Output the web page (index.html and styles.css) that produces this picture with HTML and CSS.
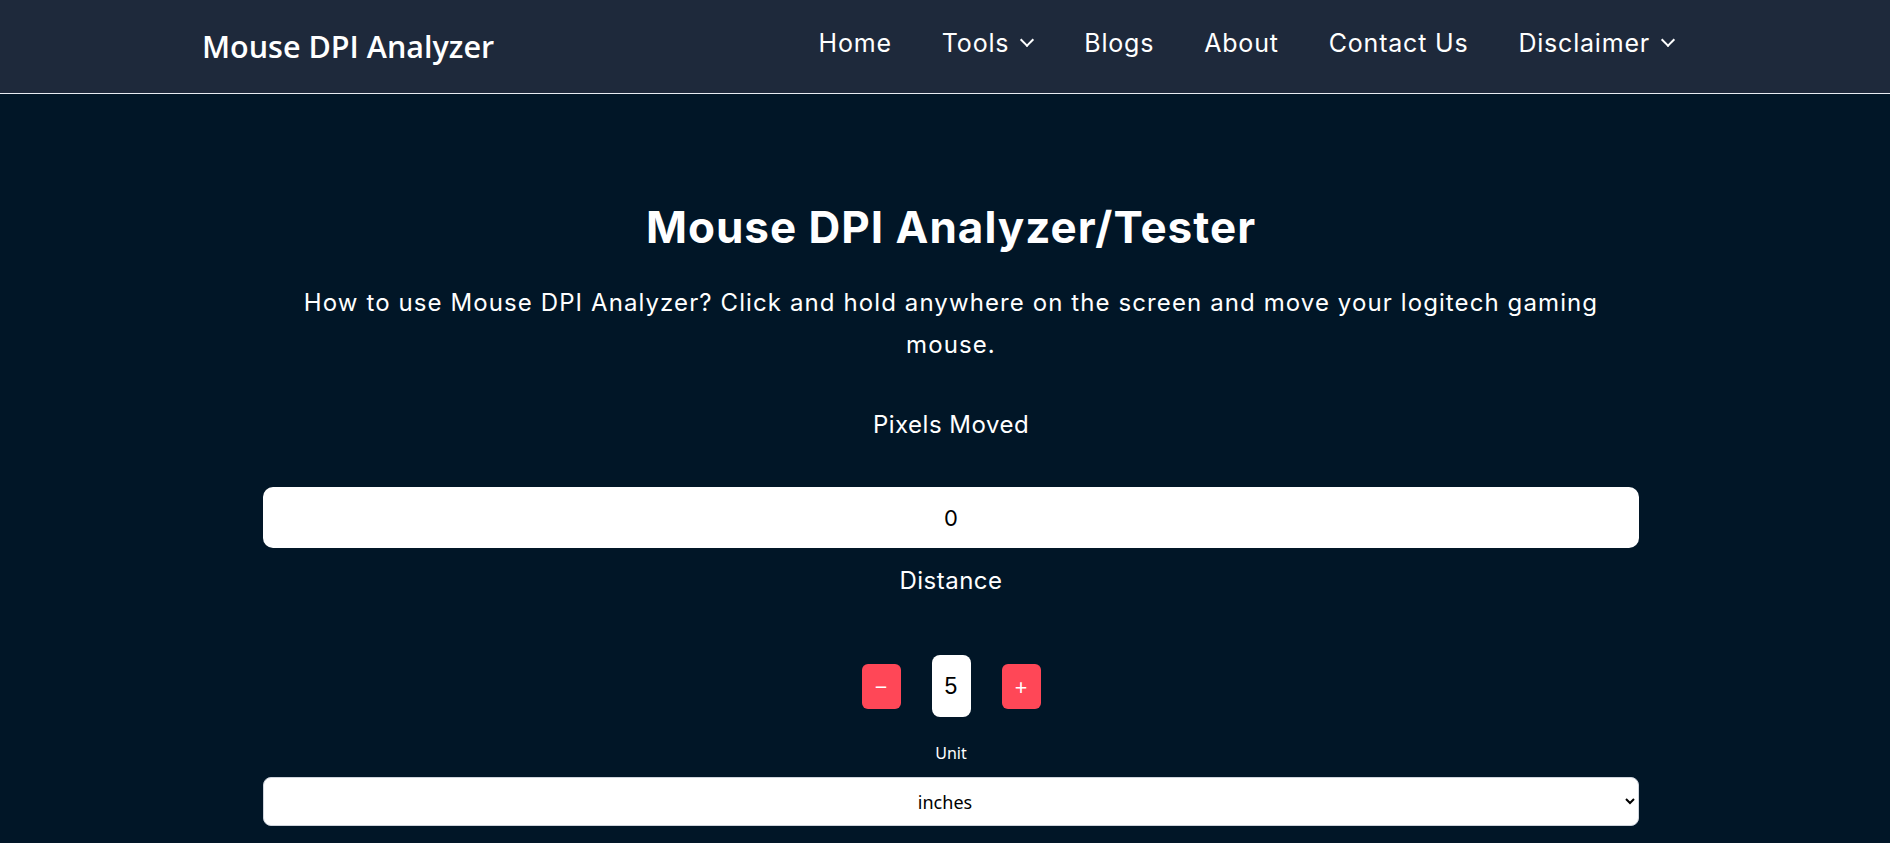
FILE: index.html
```html
<!DOCTYPE html>
<html lang="en">
<head>
    <meta charset="UTF-8">
    <meta name="viewport" content="width=device-width, initial-scale=1.0">
    <title>Mouse DPI Analyzer</title>
    <link rel="stylesheet" href="styles.css">
</head>
<body>
    <header class="topbar">
        <a class="logo" href="#">Mouse DPI Analyzer</a>
        <ul class="menu">
            <li><a href="#">Home</a></li>
            <li><a href="#">Tools</a><span class="caret"></span></li>
            <li><a href="#">Blogs</a></li>
            <li><a href="#">About</a></li>
            <li><a href="#">Contact Us</a></li>
            <li><a href="#">Disclaimer</a><span class="caret"></span></li>
        </ul>
    </header>
    <main class="tester">
        <h1>Mouse DPI Analyzer/Tester</h1>
        <p class="intro">How to use Mouse DPI Analyzer? Click and hold anywhere on the screen and move your logitech gaming mouse.</p>
        <h3 class="label">Pixels Moved</h3>
        <input class="field" id="pixels" type="text" value="0" readonly>
        <h3 class="label distance">Distance</h3>
        <div class="stepper">
            <button class="step" id="minus">&minus;</button>
            <input class="count" id="dist" type="text" value="5">
            <button class="step" id="plus">+</button>
        </div>
        <label class="unit" for="unit">Unit</label>
        <select class="units" id="unit">
            <option>inches</option>
            <option>cm</option>
        </select>
    </main>
    <script>
        var dist = document.getElementById('dist')
        document.getElementById('minus').onclick = function(){
            if(+dist.value > 1) dist.value = +dist.value - 1
        }
        document.getElementById('plus').onclick = function(){
            dist.value = +dist.value + 1
        }
    </script>
</body>
</html>
```

FILE: styles.css
```css
body{
    margin: 0;
    padding: 0;
    background: #011627;
    color: #fff;
    font-family: "Inter", "Noto Sans", sans-serif;
}
a{
    color: inherit;
    text-decoration: none;
}
.topbar{
    height: 93px;
    border-bottom: 1px solid #e8ecf2;
    background: #1e293b;
    display: flex;
    align-items: center;
    justify-content: space-between;
    padding: 0 215px 0 202px;
}
.logo{
    font-family: "Open Sans", sans-serif;
    font-weight: 600;
    font-size: 30.5px;
    margin-top: -2px;
}
.menu{
    list-style: none;
    margin: 0;
    padding: 0;
    display: flex;
    gap: 50px;
    font-size: 25px;
    letter-spacing: 0.8px;
    margin-top: -8px;
}
.menu li{
    display: flex;
    align-items: center;
}
.caret{
    width: 8px;
    height: 8px;
    border-right: 2px solid #fff;
    border-bottom: 2px solid #fff;
    transform: rotate(45deg);
    margin: -6px 2px 0 13px;
}
.tester{
    width: 1376px;
    margin: 0 auto;
    padding: 107px 0 0 12px;
    display: flex;
    flex-direction: column;
    align-items: center;
    text-align: center;
}
.tester h1{
    margin: 0;
    font-size: 44px;
    line-height: 52px;
    font-weight: 700;
    letter-spacing: 1px;
}
.intro{
    margin: 29px 0 0;
    max-width: 1330px;
    font-size: 24px;
    line-height: 42px;
    letter-spacing: 1.1px;
}
.label{
    margin: 41px 0 0;
    font-size: 24px;
    line-height: 36px;
    font-weight: 400;
    letter-spacing: 0.5px;
}
.field{
    box-sizing: border-box;
    width: 100%;
    height: 61px;
    margin-top: 44px;
    border: none;
    border-radius: 10px;
    text-align: center;
    font-family: inherit;
    font-size: 22px;
    color: #000;
}
.label.distance{
    margin-top: 15px;
}
.stepper{
    display: flex;
    align-items: center;
    gap: 31px;
    margin-top: 56px;
}
.step{
    width: 39px;
    height: 45px;
    border: none;
    border-radius: 6px;
    background: #ff4757;
    color: #fff;
    font-family: "Noto Sans", sans-serif;
    font-size: 22px;
    line-height: 1;
    padding: 0;
}
.count{
    box-sizing: border-box;
    width: 39px;
    height: 62px;
    border: none;
    border-radius: 8px;
    text-align: center;
    font-family: "Liberation Sans", sans-serif;
    font-size: 23px;
    color: #000;
    padding: 0;
}
.unit{
    margin-top: 26px;
    font-family: "Noto Sans", sans-serif;
    font-size: 16px;
    line-height: 20px;
}
.units{
    box-sizing: border-box;
    width: 100%;
    height: 49px;
    margin-top: 14px;
    border: 1px solid #cfd4dc;
    border-radius: 8px;
    background: #fff;
    font-family: "Noto Sans", sans-serif;
    font-size: 18px;
    text-align: center;
    text-align-last: center;
    color: #000;
}
```
